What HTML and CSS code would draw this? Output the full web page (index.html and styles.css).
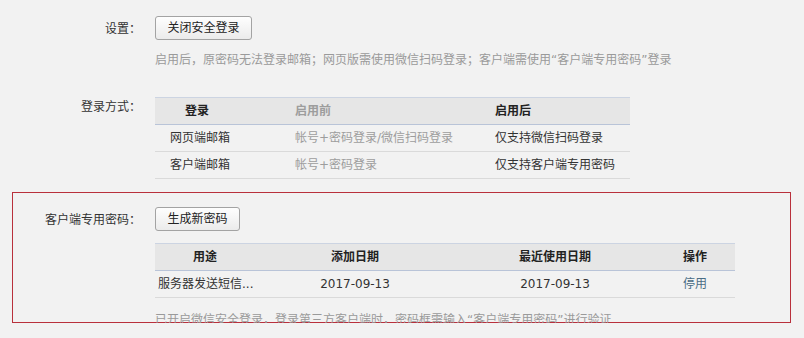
FILE: index.html
```
<!DOCTYPE html>
<html lang="zh-CN">
<head>
<meta charset="utf-8">
<title>安全登录设置</title>
<link rel="stylesheet" href="styles.css">
</head>
<body>
<div class="page">
  <div class="row row-setting">
    <div class="label">设置：</div>
    <div class="content">
      <button class="btn" type="button">关闭安全登录</button>
      <p class="hint">启用后，原密码无法登录邮箱；网页版需使用微信扫码登录；客户端需使用“客户端专用密码”登录</p>
    </div>
  </div>

  <div class="row row-mode">
    <div class="label label-top">登录方式：</div>
    <div class="content">
      <table class="tbl tbl-mode">
        <thead>
          <tr>
            <th class="c-login">登录</th>
            <th class="c-before muted">启用前</th>
            <th class="c-after">启用后</th>
          </tr>
        </thead>
        <tbody>
          <tr>
            <td class="c-login">网页端邮箱</td>
            <td class="c-before muted">帐号+密码登录/微信扫码登录</td>
            <td class="c-after">仅支持微信扫码登录</td>
          </tr>
          <tr>
            <td class="c-login">客户端邮箱</td>
            <td class="c-before muted">帐号+密码登录</td>
            <td class="c-after">仅支持客户端专用密码</td>
          </tr>
        </tbody>
      </table>
    </div>
  </div>

  <section class="highlight">
    <div class="row row-client">
      <div class="label">客户端专用密码：</div>
      <div class="content">
        <button class="btn" type="button">生成新密码</button>
        <table class="tbl tbl-pwd">
          <thead>
            <tr>
              <th class="p-use">用途</th>
              <th class="p-add">添加日期</th>
              <th class="p-last">最近使用日期</th>
              <th class="p-op">操作</th>
            </tr>
          </thead>
          <tbody>
            <tr>
              <td class="p-use">服务器发送短信...</td>
              <td class="p-add">2017-09-13</td>
              <td class="p-last">2017-09-13</td>
              <td class="p-op"><a class="link" href="#">停用</a></td>
            </tr>
          </tbody>
        </table>
        <p class="hint hint-note">已开启微信安全登录，登录第三方客户端时，密码框需输入“客户端专用密码”进行验证</p>
      </div>
    </div>
  </section>
</div>
</body>
</html>
```

FILE: styles.css
```
* {
  box-sizing: border-box;
}

html, body {
  margin: 0;
  padding: 0;
  background: #f2f2f2;
}

body {
  font-family: "DejaVu Sans", "Noto Sans CJK SC", sans-serif;
  font-size: 12px;
  color: #333;
}

.page {
  padding-top: 16px;
}

.row {
  display: grid;
  grid-template-columns: 141px 1fr;
  column-gap: 14px;
  align-items: start;
}

.label {
  font-family: "Noto Sans CJK SC", sans-serif;
  text-align: right;
  line-height: 24px;
  color: #333;
  white-space: nowrap;
}

.label-top {
  line-height: 18px;
}

.content {
  min-width: 0;
}

.btn {
  display: block;
  height: 24px;
  margin: 0;
  padding: 0 11.5px;
  font-family: inherit;
  font-size: 12px;
  line-height: 22px;
  color: #222;
  background: linear-gradient(#fefefe, #ebebeb);
  border: 1px solid #a3a3a3;
  border-radius: 3px;
  cursor: pointer;
}

.hint {
  margin: 11px 0 0;
  line-height: 18px;
  color: #9a9a9a;
  white-space: nowrap;
}

.row-mode {
  margin-top: 28px;
}

.tbl {
  border-collapse: separate;
  border-spacing: 0;
  table-layout: fixed;
  font-size: 12px;
}

.tbl th,
.tbl td {
  padding: 0;
  line-height: 26px;
  white-space: nowrap;
  text-align: left;
  border-bottom: 1px solid #dadada;
}

.tbl th {
  font-weight: bold;
  color: #222;
  background: #e6e6e6;
  border-top: 1px solid #ccd4e2;
  border-bottom: 1px solid #b9c4d8;
}

.tbl td {
  color: #333;
}

.tbl .muted {
  color: #9d9d9d;
}

.tbl-mode {
  width: 475px;
}

.tbl-mode .c-login { width: 140px; }
.tbl-mode .c-before { width: 200px; }
.tbl-mode .c-after { width: 135px; }

.tbl-mode th.c-login { padding-left: 30px; }
.tbl-mode td.c-login { padding-left: 15px; }

.highlight {
  margin: 13px 0 0 12px;
  width: 779px;
  height: 131px;
  border: 1px solid #b9303c;
}

.row-client {
  grid-template-columns: 128px 1fr;
  padding-top: 14px;
}

.tbl-pwd {
  width: 580px;
  margin-top: 12px;
}

.tbl-pwd th,
.tbl-pwd td {
  text-align: center;
}

.tbl-pwd .p-use { width: 100px; }
.tbl-pwd .p-add { width: 200px; }
.tbl-pwd .p-last { width: 200px; }
.tbl-pwd .p-op { width: 80px; }

.tbl-pwd td.p-use {
  text-align: left;
  padding-left: 3px;
}

.link {
  color: #4a6d85;
  text-decoration: none;
}

.hint-note {
  margin-top: 13px;
}
```
